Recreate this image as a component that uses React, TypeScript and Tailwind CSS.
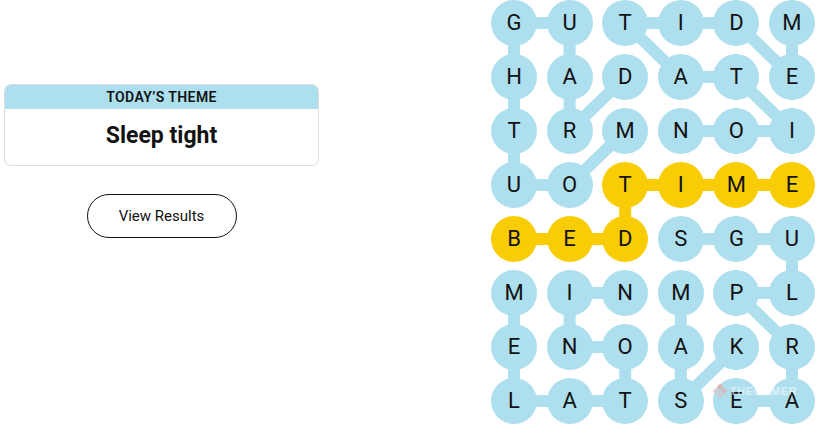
import React from "react";

const LETTERS = [
  "GUTIDM",
  "HADATE",
  "TRMNOI",
  "UOTIME",
  "BEDSGU",
  "MINMPL",
  "ENOAKR",
  "LATSEA",
];

const YELLOW = new Set(["3-2", "3-3", "3-4", "3-5", "4-0", "4-1", "4-2"]);

type Edge = [number, number, number, number, boolean?];
// [r1,c1,r2,c2,yellow]
const EDGES: Edge[] = [
  [0, 0, 0, 1],
  [0, 0, 1, 0],
  [1, 0, 2, 0],
  [2, 0, 3, 0],
  [3, 0, 3, 1],
  [3, 1, 2, 2],
  [0, 1, 1, 1],
  [1, 1, 2, 1],
  [2, 1, 1, 2],
  [0, 2, 0, 3],
  [0, 3, 0, 4],
  [0, 2, 1, 3],
  [1, 3, 1, 4],
  [0, 4, 1, 5],
  [0, 5, 1, 5],
  [1, 4, 2, 5],
  [2, 3, 2, 4],
  [2, 4, 2, 5],
  [3, 2, 3, 3, true],
  [3, 3, 3, 4, true],
  [3, 4, 3, 5, true],
  [3, 2, 4, 2, true],
  [4, 0, 4, 1, true],
  [4, 1, 4, 2, true],
  [4, 3, 4, 4],
  [4, 4, 4, 5],
  [4, 5, 5, 5],
  [5, 4, 5, 5],
  [5, 4, 6, 5],
  [6, 5, 7, 5],
  [7, 4, 7, 5],
  [7, 3, 6, 4],
  [5, 3, 6, 3],
  [6, 3, 7, 3],
  [5, 0, 6, 0],
  [6, 0, 7, 0],
  [7, 0, 7, 1],
  [7, 1, 7, 2],
  [6, 2, 7, 2],
  [6, 1, 6, 2],
  [5, 1, 6, 1],
  [5, 1, 5, 2],
];

const cx = (c: number) => 23 + c * 55.6;
const cy = (r: number) => 23 + r * 54;

function Board() {
  return (
    <div className="relative">
      <svg
        className="absolute left-0 top-0"
        width={324}
        height={424}
        viewBox="0 0 324 424"
      >
        {EDGES.map(([r1, c1, r2, c2, y], i) => (
          <line
            key={i}
            x1={cx(c1)}
            y1={cy(r1)}
            x2={cx(c2)}
            y2={cy(r2)}
            stroke={y ? "#f8cd05" : "#aedfee"}
            strokeWidth={12}
          />
        ))}
      </svg>
      <div className="relative grid grid-cols-[repeat(6,46px)] gap-x-[9.6px] gap-y-[8px]">
        {LETTERS.map((row, r) =>
          row.split("").map((ch, c) => (
            <div
              key={`${r}-${c}`}
              className={`flex h-[46px] w-[46px] items-center justify-center rounded-full text-[22px] leading-none text-[#121212] ${
                YELLOW.has(`${r}-${c}`) ? "bg-[#f8cd05]" : "bg-[#aedfee]"
              }`}
            >
              {ch}
            </div>
          ))
        )}
      </div>
      <div className="pointer-events-none absolute left-[222px] top-[383px] flex items-center gap-[3px] opacity-70">
        <svg width="14" height="14" viewBox="0 0 14 14">
          <rect x="4.5" y="0.5" width="5" height="5" transform="rotate(45 7 3)" fill="#e8a2a2" />
          <rect x="0.5" y="4.5" width="5" height="5" transform="rotate(45 3 7)" fill="#d9c4c4" />
          <rect x="8.5" y="4.5" width="5" height="5" transform="rotate(45 11 7)" fill="#e0b0b0" />
          <rect x="4.5" y="8.5" width="5" height="5" transform="rotate(45 7 11)" fill="#d9c4c4" />
        </svg>
        <span className="text-[11px] font-bold tracking-[0.5px] text-white/80 [font-family:'Liberation_Sans',sans-serif]">
          THEGAMER
        </span>
      </div>
    </div>
  );
}

export default function App() {
  return (
    <div className="flex h-[430px] w-[824px] bg-white [font-family:Roboto,'Liberation_Sans',sans-serif]">
      <div className="ml-[4px] mt-[84px] flex w-[315px] flex-col items-center">
        <div className="w-full overflow-hidden rounded-[7px] border border-[#dcdcdc]">
          <div className="flex h-[24px] items-center justify-center bg-[#aedfee] text-[14px] font-semibold tracking-[0.4px] text-[#121212]">
            TODAY’S THEME
          </div>
          <div className="flex h-[56px] items-center justify-center pb-[1px] text-[23px] font-bold text-[#121212]">
            Sleep tight
          </div>
        </div>
        <button className="mt-[28px] flex h-[44px] w-[150px] items-center justify-center rounded-full border border-[#121212] text-[15px] text-[#121212]">
          View Results
        </button>
      </div>
      <div className="ml-[172px] mt-0">
        <Board />
      </div>
    </div>
  );
}
